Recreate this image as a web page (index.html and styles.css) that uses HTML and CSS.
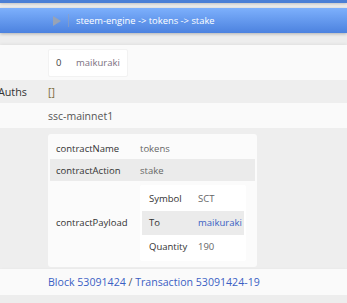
FILE: index.html
```html
<!DOCTYPE html>
<html lang="en">
<head>
    <meta charset="UTF-8">
    <meta name="viewport" content="width=device-width, initial-scale=1.0">
    <title>Transaction</title>
    <link rel="stylesheet" href="styles.css">
</head>
<body>
    <div class="topbar"></div>
    <div class="header">
        <svg class="toggle" width="8" height="10" viewBox="0 0 8 10"><path d="M0 0 L8 5 L0 10 Z" fill="#97a3b6"/></svg>
        <span class="divider"></span>
        <span class="path">steem-engine -&gt; tokens -&gt; stake</span>
    </div>

    <div class="rows">
        <div class="row light first">
            <div class="label"></div>
            <div class="value">
                <div class="auth-box">
                    <span class="idx">0</span>
                    <span class="muted">maikuraki</span>
                </div>
            </div>
        </div>
        <div class="row gray short">
            <div class="label"><span>Required Posting Auths</span></div>
            <div class="value brackets">[]</div>
        </div>
        <div class="row light mid">
            <div class="label"></div>
            <div class="value">ssc-mainnet1</div>
        </div>
        <div class="row gray contract">
            <div class="label"></div>
            <div class="value">
                <div class="card">
                    <div class="crow">
                        <div class="clabel">contractName</div>
                        <div class="cval">tokens</div>
                    </div>
                    <div class="crow alt">
                        <div class="clabel">contractAction</div>
                        <div class="cval">stake</div>
                    </div>
                    <div class="crow payload">
                        <div class="clabel">contractPayload</div>
                        <div class="cval">
                            <div class="inner">
                                <div class="irow">
                                    <div class="ilabel">Symbol</div>
                                    <div class="ival">SCT</div>
                                </div>
                                <div class="irow alt">
                                    <div class="ilabel">To</div>
                                    <div class="ival link">maikuraki</div>
                                </div>
                                <div class="irow">
                                    <div class="ilabel">Quantity</div>
                                    <div class="ival">190</div>
                                </div>
                            </div>
                        </div>
                    </div>
                </div>
            </div>
        </div>
        <div class="row light block">
            <div class="label"></div>
            <div class="value"><span class="link">Block 53091424</span> / <span class="link">Transaction 53091424-19</span></div>
        </div>
    </div>
</body>
</html>
```

FILE: styles.css
```css
body {
    font-family: "Open Sans", sans-serif;
    font-size: 9.5px;
    background-color: #ededed;
    color: #666;
    margin: 0;
    padding: 0;
}
.topbar {
    height: 3px;
    background: #4b7fd5;
    box-shadow: 0 1px 3px rgba(0, 0, 0, 0.2);
}
.header {
    margin-top: 5px;
    height: 25px;
    background: linear-gradient(#7db0fc, #4c82df);
    box-shadow: 0 1px 3px rgba(0, 0, 0, 0.25);
    display: flex;
    align-items: center;
    padding-left: 53px;
    color: white;
    font-size: 9.4px;
}
.divider {
    width: 1px;
    height: 13px;
    background: rgba(150, 160, 180, 0.6);
    margin-left: 7px;
}
.path {
    margin-left: 7px;
}
.rows {
    margin-top: 12px;
    box-shadow: 0 -1px 3px rgba(0, 0, 0, 0.06);
}
.row {
    display: flex;
    align-items: center;
}
.light {
    background: #fafafa;
}
.gray {
    background: #eeeeee;
}
.first {
    height: 35px;
}
.short {
    height: 23px;
}
.mid {
    height: 25px;
    font-size: 10.5px;
}
.block {
    height: 26px;
    font-size: 10.6px;
    box-shadow: 0 1px 3px rgba(0, 0, 0, 0.08);
}
.label {
    width: 48px;
    flex-shrink: 0;
    box-sizing: border-box;
    padding-right: 21px;
    display: flex;
    justify-content: flex-end;
    overflow: hidden;
    white-space: nowrap;
    color: #333;
    font-size: 10.8px;
}
.label span {
    flex-shrink: 0;
}
.value {
    color: #555;
}
.brackets {
    color: #7a6a3a;
    font-size: 10.5px;
}
.auth-box {
    width: 80px;
    height: 28px;
    box-sizing: border-box;
    background: #fff;
    border: 1px solid #f2f2f2;
    border-radius: 2px;
    display: flex;
    align-items: center;
    padding-left: 7px;
}
.idx {
    color: #444;
    width: 20px;
}
.muted {
    color: #7a6f80;
}
.contract {
    padding: 6px 0 2px;
}
.card {
    width: 209px;
    box-sizing: border-box;
    padding: 3px 2px 3px;
    background: #fbfbfb;
    border-radius: 3px;
}
.crow {
    display: flex;
    align-items: center;
    height: 22px;
}
.alt {
    background: #ebebeb;
}
.payload {
    height: 83px;
}
.clabel {
    width: 90px;
    padding-left: 6px;
    box-sizing: border-box;
    color: #333;
}
.cval {
    color: #666;
}
.inner {
    width: 106px;
    box-sizing: border-box;
    padding: 2px 2px;
    background: #fff;
    border-radius: 2px;
}
.irow {
    display: flex;
    align-items: center;
    height: 24px;
}
.ilabel {
    width: 56px;
    padding-left: 7px;
    box-sizing: border-box;
    color: #333;
}
.ival {
    color: #666;
}
.link {
    color: #3a5fc4;
}
```
